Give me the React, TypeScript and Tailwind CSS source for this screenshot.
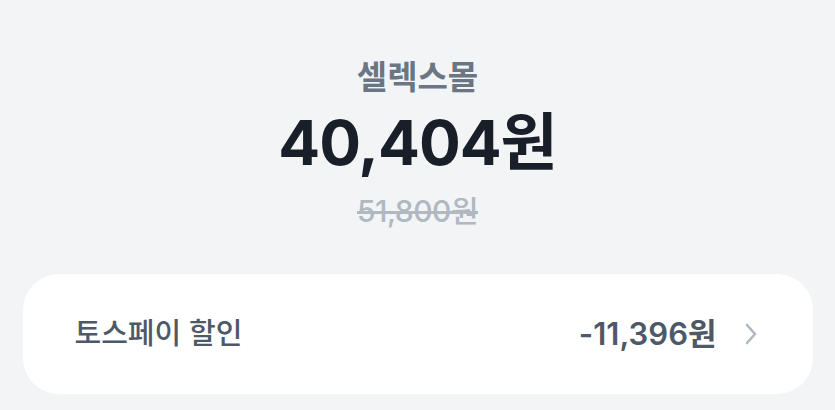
const App = () => {
  return (
    <div
      className="w-[835px] h-[410px] bg-[#f3f4f6] flex flex-col items-center overflow-hidden"
      style={{ fontFamily: 'Inter, "Noto Sans CJK KR", "Noto Sans", sans-serif' }}
    >
      <div className="mt-[55px] text-[33px] leading-[44px] font-bold text-[#6b7684]">셀렉스몰</div>
      <div className="mt-[8px] text-[62px] leading-[72px] font-bold text-[#191f28] tracking-[-1px]">40,404원</div>
      <div className="mt-[14px] text-[30px] leading-[36px] font-medium text-[#b0b8c1] line-through tracking-[-0.5px]">51,800원</div>
      <div className="mt-[45px] w-[790px] h-[120px] bg-white rounded-[36px] flex items-center px-[52px]">
        <span className="text-[29px] font-medium text-[#4e5968] flex-1">토스페이 할인</span>
        <span className="text-[31px] font-semibold text-[#4e5968]">-11,396원</span>
        <svg width="20" height="28" viewBox="0 0 20 28" className="ml-[24px]">
          <path d="M6 5 L14 14 L6 23" fill="none" stroke="#b0b8c1" strokeWidth="2.6" strokeLinecap="round" strokeLinejoin="round" />
        </svg>
      </div>
    </div>
  );
};

export default App;
